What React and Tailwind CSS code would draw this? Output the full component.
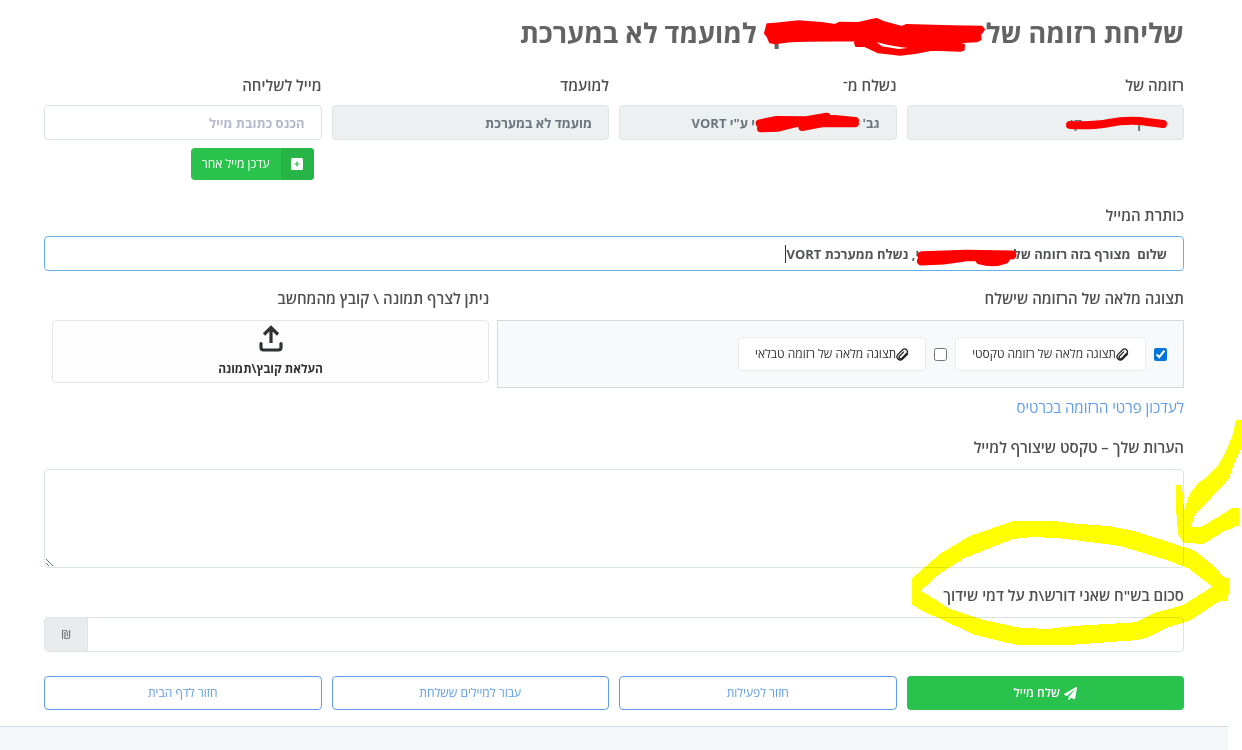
import React from "react";
import { useState } from "react";
import { FaPaperPlane } from "react-icons/fa";

const INPUT_CLASS =
  "h-[35px] w-full rounded border border-[#dce4e6] px-4 text-[13px] font-bold outline-none placeholder:text-[#b5b9cc]";

const LABEL_CLASS = "block text-[15px] leading-6 font-semibold text-[#4f4f4f]";

// wide blank that keeps the room of a hidden name
const BLANK = "\u2003";

function Label({ htmlFor, children }) {
  return (
    <label htmlFor={htmlFor} className={LABEL_CLASS}>
      {children}
    </label>
  );
}

function Field({ id, label, children, ...props }) {
  return (
    <div>
      <Label htmlFor={id}>{label}</Label>
      <input
        id={id}
        className={`${INPUT_CLASS} mt-2 text-[#6c757d] disabled:bg-[#ecf0f1]`}
        {...props}
      />
      {children}
    </div>
  );
}

function PaperclipIcon() {
  return (
    <svg
      viewBox="0 0 24 24"
      className="size-[13px]"
      fill="none"
      stroke="#222"
      strokeWidth="2.4"
      strokeLinecap="round"
      strokeLinejoin="round"
    >
      <path d="M21.44 11.05l-9.19 9.19a6 6 0 0 1-8.49-8.49l8.57-8.57a5 5 0 0 1 7.100 7.100l-9 9a3 3 0 0 1-4.200-4.200l8-8" />
    </svg>
  );
}

function PlusSquareIcon() {
  return (
    <svg viewBox="0 0 12 12" className="size-3">
      <rect width="12" height="12" rx="1.500" fill="#fff" />
      <path d="M6 3.500v5M3.500 6h5" stroke="#27b548" strokeWidth="1.200" />
    </svg>
  );
}

function Attachment({ label, checked, onChange }) {
  return (
    <div className="flex items-center gap-2">
      <input
        type="checkbox"
        aria-label={label}
        checked={checked}
        onChange={onChange}
        className="size-[13px] accent-[#0075d7]"
      />
      <button
        type="button"
        className="flex h-[34px] items-center rounded-sm border border-[#ebebeb] bg-white px-4 text-xs text-[#333]"
      >
        <PaperclipIcon />
        {label}
      </button>
    </div>
  );
}

function OutlineButton({ children }) {
  return (
    <button
      type="button"
      className="h-[34px] rounded-sm border border-[#5d9cec] bg-white text-xs text-[#5d9cec]"
    >
      {children}
    </button>
  );
}

function UploadIcon() {
  return (
    <svg
      viewBox="0 0 24 28"
      className="h-7 w-6"
      fill="none"
      stroke="#2f3133"
      strokeWidth="3.2"
      strokeLinecap="round"
      strokeLinejoin="round"
    >
      <path d="M12 18V3M5 9.500L12 2.500l7 7" strokeLinecap="butt" strokeLinejoin="miter" />
      <path d="M2 18.500v4q0 2.500 2.500 2.500h15q2.500 0 2.500-2.500v-4" />
    </svg>
  );
}

// hand drawn marks that lie over the form
function Marks() {
  return (
    <>
      <svg
        width="1242"
        height="750"
        viewBox="0 0 1242 750"
        className="pointer-events-none absolute top-0 left-0"
        aria-hidden="true"
      >
        <g transform="translate(755 10) scale(0.33333)">
          <path
            fill="#ff0000"
            fillRule="evenodd"
            stroke="#ff0000"
            strokeWidth="6"
            strokeLinejoin="round"
            d="M30 70L37 43L60 41L130 34L200 39L240 45L255 38L310 39L350 30L365 27L385 36L440 51L455 45L590 49L680 50L687 58L675 75L677 88L665 94L610 97L627 105L626 119L615 122L530 119L480 129L435 134L370 127L330 108L303 108L300 98L308 91L155 92L105 94L60 100L45 97L38 80ZM350 89L380 112L430 120L485 114L440 109L400 102Z"
          />
          <path
            fill="none"
            stroke="#ff0000"
            strokeWidth="24"
            strokeLinecap="round"
            strokeLinejoin="round"
            d="M14 340L65 330L150 331L215 320M18 355L70 353L105 344L150 333M142 351L200 340L300 340M215 325L300 333"
          />
        </g>
        <g
          fill="none"
          stroke="#ff0000"
          strokeLinecap="round"
          strokeLinejoin="round"
          transform="translate(900 200) scale(0.33333)"
        >
          <path d="M66 167L200 163L336 165M64 183L130 180L190 172M240 180Q280 192 315 178M200 170H320" strokeWidth="27" />
        </g>
        <path
          d="M1070 125Q1095 126 1109 123T1140 121L1163 124"
          fill="none"
          stroke="#ff0000"
          strokeWidth="8"
          strokeLinecap="round"
        />
      </svg>
      <svg
        width="1242"
        height="750"
        viewBox="0 0 1242 750"
        className="pointer-events-none absolute top-0 left-0 mix-blend-multiply"
        aria-hidden="true"
      >
        <g
          fill="#ffff00"
          fillRule="evenodd"
          shapeRendering="crispEdges"
          transform="translate(890 410) scale(0.33333)"
        >
          <path d="M66 505L150 432L240 378L370 333H490L545 340L655 348L730 362L810 388L910 420L965 462L1000 500L1017 505V550L1010 572L985 575L900 632L840 650L775 682L745 690L520 706H385L325 692L245 672L160 630L115 612L66 585ZM93 542L150 490L222 445L335 400L370 387L430 381L520 386L690 408L830 450L895 475L967 530L880 585L790 610L735 637L550 648L470 657L390 653L280 630L180 597Z" />
          <path d="M1038 30H1056V112L1030 165L1018 205L965 262L915 315L903 350H935L1028 294H1047V346L1000 365L940 402L880 398L865 375L858 300V225H876L882 300L900 250L925 218L945 205L985 165L1005 130L1030 70Z" />
        </g>
      </svg>
    </>
  );
}

function App() {
  const [email, setEmail] = useState("");
  const [subject, setSubject] = useState(
    `שלום  מצורף בזה רזומה של ${BLANK.repeat(7)}י, נשלח ממערכת VORT`
  );
  const [attachText, setAttachText] = useState(true);
  const [attachTable, setAttachTable] = useState(false);

  return (
    <div
      dir="rtl"
      className="relative min-h-screen overflow-hidden bg-white font-['Open_Sans','Noto_Sans',sans-serif] text-[#636363]"
    >
      <form className="mr-[14px] px-11 pt-3 pb-4" onSubmit={(event) => event.preventDefault()}>
        <h1 className="flex h-[42px] items-center text-[27px] font-bold">
          <span>שליחת רזומה של</span>
          <span className="w-[229px] pl-4 text-left">ן</span>
          <span>למועמד לא במערכת</span>
        </h1>

        <div className="mt-[19px] grid h-[110px] grid-cols-4 items-start gap-[10px]">
          <Field
            id="resume-of"
            label="רזומה של"
            disabled
            value={`${BLANK.repeat(2)}ן${BLANK.repeat(4)} קי`}
          />
          <Field
            id="sent-from"
            label="נשלח מ־"
            disabled
            value={`גב' ${BLANK.repeat(8)}י ע"י VORT`}
          />
          <Field id="candidate" label="למועמד" disabled value="מועמד לא במערכת" />
          <Field
            id="email"
            label="מייל לשליחה"
            placeholder="הכנס כתובת מייל"
            value={email}
            onChange={(event) => setEmail(event.target.value)}
          >
            <button
              type="button"
              className="mt-2 mr-2 flex h-8 items-center overflow-hidden rounded-sm bg-[#29c24d] text-xs font-medium text-white"
            >
              <span className="flex h-full w-[33px] items-center justify-center bg-[#27b548]">
                <PlusSquareIcon />
              </span>
              <span className="px-[11px]">עדכן מייל אחר</span>
            </button>
          </Field>
        </div>

        <div className="mt-5">
          <Label htmlFor="subject">כותרת המייל</Label>
          <div className="relative mt-[9px]">
            <input
              id="subject"
              value={subject}
              onChange={(event) => setSubject(event.target.value)}
              className="block h-[35px] w-full rounded border border-[#66afe9] px-4 text-[13px] font-bold whitespace-pre text-[#515356] outline-none"
            />
            <span className="absolute top-[9px] right-[398px] h-[18px] w-px bg-[#333]" />
          </div>
        </div>

        <div className="mt-[15px] grid grid-cols-[11fr_7fr] gap-2 pl-2">
          <div>
            <h2 className={LABEL_CLASS}>תצוגה מלאה של הרזומה שישלח</h2>
            <div className="mt-[10px] flex h-[68px] items-center gap-2 border border-[#d6d8da] bg-[#f8f9fb] px-4">
              <Attachment
                label="תצוגה מלאה של רזומה טקסטי"
                checked={attachText}
                onChange={() => setAttachText(!attachText)}
              />
              <Attachment
                label="תצוגה מלאה של רזומה טבלאי"
                checked={attachTable}
                onChange={() => setAttachTable(!attachTable)}
              />
            </div>
          </div>
          <div>
            <h2 className={LABEL_CLASS}>ניתן לצרף תמונה \ קובץ מהמחשב</h2>
            <label className="mt-[10px] flex h-[63px] cursor-pointer flex-col items-center rounded-sm border border-[#e6e6e6] bg-[#fdfdfd] pt-1 text-xs font-bold text-[#2f3133]">
              <UploadIcon />
              <span className="mt-[6px] leading-5">העלאת קובץ\תמונה</span>
              <input type="file" className="sr-only" />
            </label>
          </div>
        </div>

        <a href="#card" className="mt-[7px] block w-fit text-[15px] leading-6 text-[#5d9cec]">
          לעדכון פרטי הרזומה בכרטיס
        </a>

        <div className="mt-4">
          <Label htmlFor="notes">הערות שלך – טקסט שיצורף למייל</Label>
          <textarea
            id="notes"
            className="mt-[10px] block h-[99px] w-full resize rounded border border-[#dce4e6] px-4 py-2 text-sm outline-none"
          />
        </div>

        <div className="mt-[15px]">
          <Label htmlFor="amount">סכום בש"ח שאני דורש\ת על דמי שידוך</Label>
          <div className="mt-[10px] flex h-[35px] overflow-hidden rounded border border-[#dce4e6]">
            <input id="amount" className="min-w-0 flex-1 px-4 text-sm outline-none" />
            <span className="flex w-[43px] items-center justify-center border-r border-[#dce4e6] bg-[#e9ecef] text-[13px]">
              ₪
            </span>
          </div>
        </div>

        <div className="mt-6 grid grid-cols-4 gap-[10px]">
          <button
            type="submit"
            className="flex h-[34px] items-center justify-center gap-1 rounded-sm bg-[#29c24d] text-xs font-semibold text-white"
          >
            <FaPaperPlane className="size-[13px]" />
            שלח מייל
          </button>
          <OutlineButton>חזור לפעילות</OutlineButton>
          <OutlineButton>עבור למיילים ששלחת</OutlineButton>
          <OutlineButton>חזור לדף הבית</OutlineButton>
        </div>
      </form>
      <footer className="mr-[14px] h-6 border-t border-[#cfdbe2] bg-[#f5f7fa]" />
      <Marks />
    </div>
  );
}

export default App;
